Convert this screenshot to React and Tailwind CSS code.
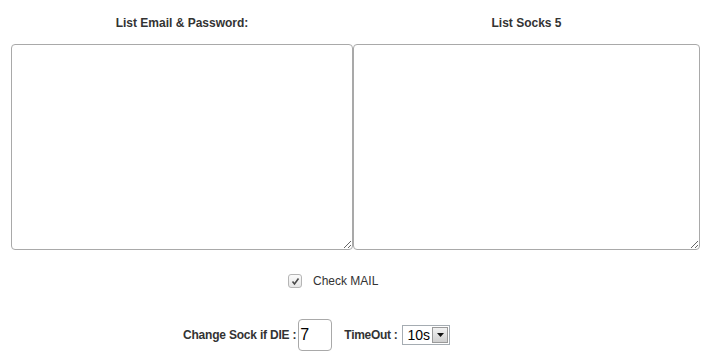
export default function App() {
  return (
    <div className="min-h-screen bg-white font-['Liberation_Sans',Arial,sans-serif] text-[#333]">
      <div className="flex pl-[11px]">
        <div className="w-[342px]">
          <div className="h-[44px] pt-[16px] text-center text-[12px] font-bold leading-[14px]">
            List Email &amp; Password:
          </div>
          <textarea className="block h-[206px] w-full rounded-[4px] border border-[#a9a9a9] bg-white outline-none" />
        </div>
        <div className="w-[347px]">
          <div className="h-[44px] pt-[16px] text-center text-[12px] font-bold leading-[14px]">
            List Socks 5
          </div>
          <textarea className="block h-[206px] w-full rounded-[4px] border border-[#a9a9a9] bg-white outline-none" />
        </div>
      </div>

      <div className="flex items-center pl-[288px] pt-[24px]">
        <span className="flex h-[14px] w-[14px] items-center justify-center rounded-[3px] border border-[#b5b5b5] bg-gradient-to-b from-[#fbfbfb] to-[#e6e6e6]">
          <svg width="9" height="9" viewBox="0 0 9 9">
            <path d="M1.5 4.5 L3.5 7 L7.5 1.5" fill="none" stroke="#4a4a4a" strokeWidth="1.6" />
          </svg>
        </span>
        <label className="ml-[11px] text-[12px] leading-[14px] text-[#333]">Check MAIL</label>
      </div>

      <div className="flex items-center pl-[183px] pt-[31px]">
        <span className="text-[12px] font-bold leading-[14px] tracking-[-0.2px]">Change Sock if DIE :</span>
        <input
          defaultValue="7"
          className="ml-[2px] h-[32px] w-[34px] rounded-[4px] border border-[#a9a9a9] px-[1px] text-[16px] text-black outline-none"
        />
        <span className="ml-[12px] text-[12px] font-bold leading-[14px] tracking-[-0.3px]">TimeOut :</span>
        <div className="ml-[5px] flex h-[20px] w-[48px] items-center border border-[#a5acb2] bg-white">
          <span className="flex-1 pl-[4px] text-[14px] leading-[16px] text-black">10s</span>
          <span className="mr-[1px] flex h-[16px] w-[16px] items-center justify-center border border-[#9a9a9a] bg-gradient-to-b from-[#f2f2f2] to-[#cfcfcf]">
            <svg width="7" height="4" viewBox="0 0 7 4">
              <path d="M0 0 H7 L3.5 4 Z" fill="#111" />
            </svg>
          </span>
        </div>
      </div>
    </div>
  );
}
